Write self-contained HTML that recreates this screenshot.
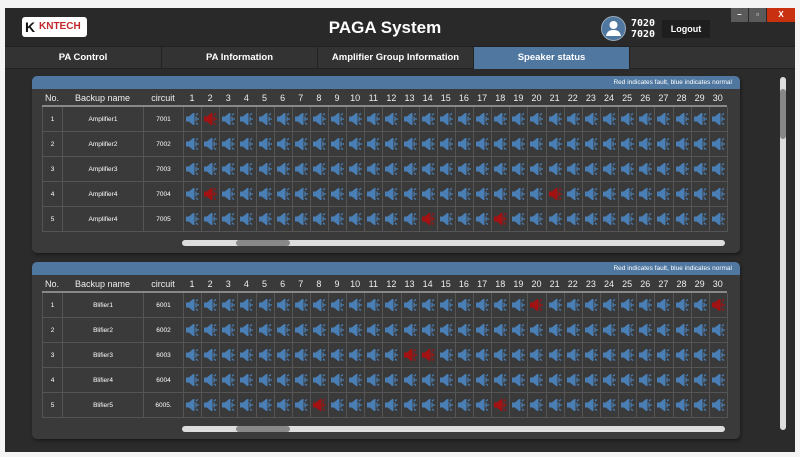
<!DOCTYPE html>
<html><head><meta charset="utf-8"><style>
*{margin:0;padding:0;box-sizing:border-box}
body{width:800px;height:457px;background:#f4f4f4;position:relative;overflow:hidden;font-family:"Liberation Sans",sans-serif;color:#fff}
.app{position:absolute;left:5px;top:8px;width:790px;height:444px;background:#2b2b2b}
.hdr{position:absolute;left:0;top:0;width:790px;height:38px;background:#292929}
.logo{position:absolute;left:17px;top:9px;width:65px;height:20px;background:#fff;border-radius:3px;color:#c0282d;font-weight:bold;font-size:10px;line-height:20px;padding-left:17px}
.title{position:absolute;left:0;width:760px;text-align:center;top:10px;font-size:17px;font-weight:bold}
.av{position:absolute;left:596px;top:8px;width:25px;height:25px;border-radius:50%;background:#4f77a0;border:1px solid #9ab}
.num{position:absolute;left:626px;top:10px;font:bold 10px/11px "DejaVu Sans Mono",monospace}
.logout{position:absolute;left:657px;top:12px;width:48px;height:18px;background:#1e1e1e;font-size:9px;font-weight:bold;text-align:center;line-height:18px}
.wb{position:absolute;top:0;height:14px;background:#5a5a5a;font-size:8px;text-align:center;line-height:14px;font-weight:bold}
.tabs{position:absolute;left:0;top:38px;width:790px;height:23px;background:#333;border-top:1px solid #222;border-bottom:1px solid #222}
.tab{position:absolute;top:0;height:22px;border-right:1px solid #222;font-size:9.5px;font-weight:bold;text-align:center;line-height:21px}
.panel{position:absolute;left:27px;width:708px;height:177px;background:#3a3a3a;border-radius:5px;box-shadow:1px 2px 3px #1a1a1a}
.bar{height:13px;background:#4f77a0;border-radius:5px 5px 0 0;font-size:6.5px;text-align:right;padding-right:8px;line-height:13px}
.hrow{position:absolute;left:10px;top:17px;height:14px;font-size:9px;color:#eee;border-bottom:2px solid #888;width:685px}
.hrow span{position:absolute;text-align:center;top:0}
.row{position:absolute;left:10px;width:685px;height:25px;border-bottom:1px solid #555;border-left:1px solid #555;font-size:6.5px}
.row span{position:absolute;top:0;height:25px;line-height:25px;text-align:center;border-right:1px solid #555}
.row svg{position:absolute;top:6px}
.hs{position:absolute;left:150px;width:543px;height:6px;background:#ddd;border-radius:3px}
.hs i{position:absolute;left:54px;width:54px;height:6px;background:#888;border-radius:3px}
</style></head><body>
<svg width="0" height="0" style="position:absolute"><defs>
<g id="sp"><path d="M0 4h3l5-4v12l-5-4H0z"/><path d="M10 2l2-1.5M10 6h3M10 10l2 1.5M10 3.5v5" stroke-width="1.2" fill="none"/></g>
</defs></svg>
<div class="app">
 <div class="hdr">
  <div class="logo"><span style="position:absolute;left:3px;top:0;color:#111;font-size:14px">K</span>KNTECH</div>
  <div class="title">PAGA System</div>
  <div class="av"><svg width="23" height="23" viewBox="0 0 23 23"><circle cx="11.5" cy="8" r="4" fill="#fff"/><path d="M4 19c1-5 4-6 7.5-6s6.5 1 7.5 6z" fill="#fff"/></svg></div>
  <div class="num">7020<br>7020</div>
  <div class="logout">Logout</div>
  <div class="wb" style="left:726px;width:17px">–</div>
  <div class="wb" style="left:744px;width:17px">▫</div>
  <div class="wb" style="left:762px;width:28px;background:#c8300f">X</div>
 </div>
 <div class="tabs">
  <div class="tab" style="left:0;width:157px">PA Control</div>
  <div class="tab" style="left:157px;width:156px">PA Information</div>
  <div class="tab" style="left:313px;width:156px">Amplifier Group Information</div>
  <div class="tab" style="left:469px;width:156px;background:#4f77a0">Speaker status</div>
 </div>
 <div id="p1" class="panel" style="top:68px"></div>
 <div id="p2" class="panel" style="top:254px"></div>
 <div style="position:absolute;left:775px;top:69px;width:6px;height:353px;background:#ddd;border-radius:3px"><div style="position:absolute;top:12px;width:6px;height:50px;background:#888;border-radius:3px"></div></div>
</div>
<script>
function build(id,names,circ,reds){
 var p=document.getElementById(id);
 var h='<div class="bar">Red indicates fault, blue indicates normal</div><div class="hrow">';
 h+='<span style="left:0;width:20px">No.</span><span style="left:20px;width:81px">Backup name</span><span style="left:101px;width:40px">circuit</span>';
 for(var c=0;c<30;c++)h+='<span style="left:'+(141+c*18.13)+'px;width:18px">'+(c+1)+'</span>';
 h+='</div>';
 for(var r=0;r<5;r++){
  h+='<div class="row" style="top:'+(31+r*25)+'px"><span style="left:0;width:20px">'+(r+1)+'</span><span style="left:20px;width:81px">'+names[r]+'</span><span style="left:101px;width:40px">'+circ[r]+'</span>';
  for(var c=0;c<30;c++){
   var red=reds.indexOf((r+1)+'-'+(c+1))>=0;var col=red?'#a31212':'#4a7fb5';
   h+='<span style="left:'+(141+c*18.13)+'px;width:18.13px"></span><svg width="14" height="12" style="left:'+(143+c*18.13)+'px" fill="'+col+'" stroke="'+col+'"><use href="#sp"/></svg>';
  }
  h+='</div>';
 }
 h+='<div class="hs" style="top:164px"><i></i></div>';
 p.innerHTML=h;
}
build('p1',['Amplifier1','Amplifier2','Amplifier3','Amplifier4','Amplifier4'],[7001,7002,7003,7004,7005],['1-2','4-2','4-21','5-14','5-18']);
build('p2',['Blifier1','Blifier2','Blifier3','Blifier4','Blifier5'],[6001,6002,6003,6004,'6005.'],['1-20','1-30','3-13','3-14','5-8','5-18']);
</script>
</body></html>
